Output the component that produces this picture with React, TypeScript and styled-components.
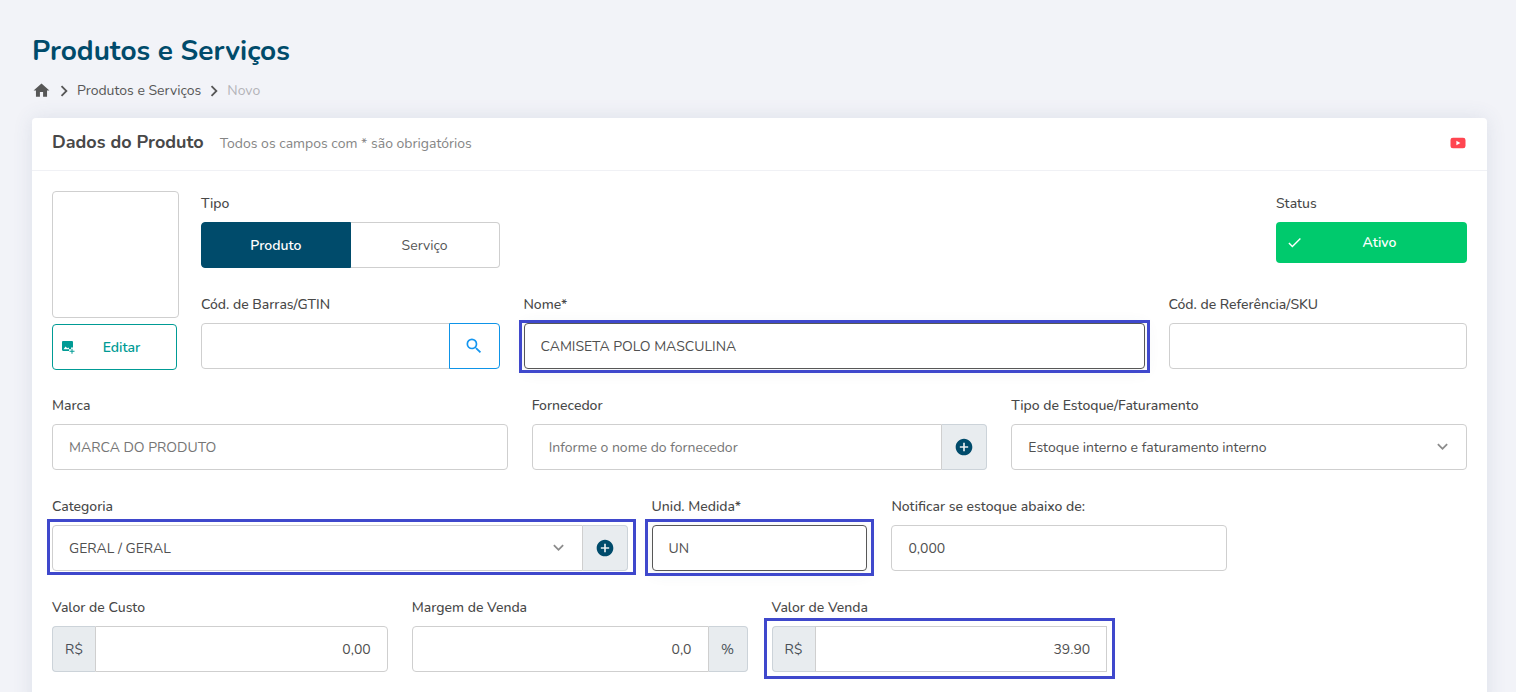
import React from "react";
import styled, { createGlobalStyle, css } from "styled-components";
import {
  MdAddCircle,
  MdCheck,
  MdHome,
  MdKeyboardArrowDown,
  MdKeyboardArrowRight,
  MdSearch,
} from "react-icons/md";

const GlobalStyle = createGlobalStyle`
  *, *::before, *::after { box-sizing: border-box; }
  body {
    margin: 0;
    background: #f2f3f8;
    color: #484848;
    font-family: Nunito, Lato, "Open Sans", sans-serif;
    font-size: 14px;
    line-height: 25px;
  }
  button, input, select { font: inherit; color: inherit; margin: 0; }
`;

const Page = styled.main`
  padding: 32px 29px 32px 32px;
`;

const PageTitle = styled.h1`
  margin: 0;
  color: #004b6b;
  font-size: 28px;
  font-weight: 700;
  line-height: 38px;
`;

const Breadcrumb = styled.nav`
  display: flex;
  align-items: center;
  gap: 2px;
  margin-top: 8px;
  color: #575757;

  a {
    display: flex;
    color: inherit;
    text-decoration: none;
  }
`;

const Current = styled.span`
  color: #b4b4b8;
`;

const Card = styled.section`
  margin-top: 15px;
  background: #fff;
  border-radius: 4px;
  box-shadow: 0 0 20px rgba(69, 90, 120, 0.12);
`;

const CardHeader = styled.header`
  display: flex;
  align-items: center;
  justify-content: space-between;
  height: 53px;
  padding: 0 20px 2px;
  border-bottom: 1px solid #f0f1f5;
`;

const Heading = styled.div`
  display: flex;
  align-items: baseline;
  gap: 16px;
`;

const CardTitle = styled.h2`
  margin: 0;
  font-size: 18px;
  font-weight: 700;
`;

const Hint = styled.span`
  color: #858585;
`;

const VideoLink = styled.a`
  display: flex;
  margin-right: 1px;
`;

const Form = styled.form`
  display: grid;
  gap: 24px;
  padding: 20px 20px 40px;
`;

const Intro = styled.div`
  display: grid;
  grid-template-columns: 125px minmax(0, 1fr);
  gap: 24px;
`;

const Photo = styled.div`
  display: grid;
  grid-template-columns: 100%;
  gap: 6px;
  align-content: start;
  margin-bottom: -1px;
`;

const Preview = styled.div`
  width: 127px;
  height: 127px;
  border: 1px solid #cfcfcf;
  border-radius: 4px;
`;

const Rows = styled.div`
  display: grid;
  align-content: start;
  gap: 24px;
`;

const Row = styled.div`
  display: grid;
  grid-template-columns: repeat(12, minmax(0, 1fr));
  column-gap: 24px;
`;

const Field = styled.div<{ $span: number; $end?: boolean }>`
  grid-column: ${(p) => (p.$end ? `${13 - p.$span} / -1` : `span ${p.$span}`)};
`;

const labelStyle = css`
  display: block;
  margin: 0 0 6px;
  font-weight: 500;
`;

const Label = styled.label`
  ${labelStyle}
`;

const Caption = styled.span`
  ${labelStyle}
`;

const Control = styled.div`
  position: relative;
  display: flex;
  height: 46px;
`;

const controlStyle = css<{ $dark?: boolean; $right?: boolean }>`
  flex: 1;
  min-width: 0;
  width: 100%;
  height: 46px;
  padding: 0 16px;
  border: 1px solid ${(p) => (p.$dark ? "#575757" : "#cfcfcf")};
  border-radius: 4px;
  background: #fff;
  color: #505050;
  text-align: ${(p) => (p.$right ? "right" : "left")};
  outline: none;

  &:not(:first-child) {
    border-top-left-radius: 0;
    border-bottom-left-radius: 0;
  }
`;

const Input = styled.input<{ $dark?: boolean; $right?: boolean; $joined?: boolean }>`
  ${controlStyle}
  ${(p) => p.$joined && "border-top-right-radius: 0; border-bottom-right-radius: 0;"}
  ${(p) => p.$dark && "box-shadow: 0 2px 16px rgba(69, 90, 100, 0.08);"}

  &::placeholder {
    color: #757575;
    opacity: 1;
  }
`;

const SelectBox = styled.div`
  position: relative;
  flex: 1;
  min-width: 0;

  svg {
    position: absolute;
    top: 12px;
    right: 14px;
    color: #8b8b8b;
    pointer-events: none;
  }
`;

const Select = styled.select<{ $joined?: boolean }>`
  ${controlStyle}
  appearance: none;
  ${(p) => p.$joined && "border-top-right-radius: 0; border-bottom-right-radius: 0;"}
`;

const addonStyle = css<{ $side?: "left" | "right" }>`
  display: flex;
  align-items: center;
  justify-content: center;
  flex: none;
  padding: 0;
  border: 1px solid #ccd3d9;
  background: #e8ecef;
  border-radius: ${(p) => (p.$side === "left" ? "4px 0 0 4px" : "0 4px 4px 0")};
  ${(p) => (p.$side === "left" ? "border-right: 0;" : "border-left: 0;")}
`;

const Unit = styled.span<{ $side?: "left" | "right" }>`
  ${addonStyle}
  width: ${(p) => (p.$side === "left" ? 43 : 39)}px;
  color: #495057;
`;

const AddButton = styled.button<{ $side?: "left" | "right" }>`
  ${addonStyle}
  width: 45px;
  color: #004b6b;
`;

const SearchButton = styled.button`
  display: flex;
  align-items: center;
  justify-content: center;
  flex: none;
  width: 51px;
  margin-left: -1px;
  z-index: 1;
  border: 1px solid #0e94e8;
  border-radius: 0 4px 4px 0;
  background: #fff;
  color: #1496f0;
`;

const EditButton = styled.button`
  display: grid;
  grid-template-columns: 14px 1fr;
  align-items: center;
  height: 46px;
  padding: 0 8px;
  border: 1px solid #009b95;
  border-radius: 4px;
  background: #fff;
  color: #009b95;
  font-weight: 600;
`;

const TypeButton = styled.button<{ $active?: boolean }>`
  flex: 1;
  border: 1px solid ${(p) => (p.$active ? "#004b6b" : "#cfcfcf")};
  background: ${(p) => (p.$active ? "#004b6b" : "#fff")};
  color: ${(p) => (p.$active ? "#fff" : "#555")};
  font-weight: ${(p) => (p.$active ? 600 : 400)};

  &:first-child { border-radius: 4px 0 0 4px; }
  &:last-child { border-radius: 0 4px 4px 0; border-left: 0; }
`;

const StatusButton = styled.button`
  display: grid;
  grid-template-columns: 16px 1fr;
  align-items: center;
  width: 100%;
  height: 41px;
  padding: 0 10px;
  border: 0;
  border-radius: 4px;
  background: #00ca6d;
  color: #fff;
  font-weight: 600;
`;

const Highlight = styled.span<{ $inset: string }>`
  position: absolute;
  inset: ${(p) => p.$inset};
  z-index: 2;
  border: 3px solid #3f48cc;
  pointer-events: none;
`;

const YoutubeIcon = () => (
  <svg width="16" height="12" viewBox="0 0 16 12" aria-hidden="true">
    <rect x="0.5" y="0.7" width="15" height="10.6" rx="2.4" fill="#ff4550" />
    <path d="M6.4 3.8v4.4l4-2.2z" fill="#fff" />
  </svg>
);

const ImagePlusIcon = () => (
  <svg width="14" height="14" viewBox="0 0 14 14" fill="currentColor" aria-hidden="true">
    <path d="M2.200 1h8.600C11.500 1 12 1.500 12 2.200V7.500H10V9.300H8V11H2.200C1.500 11 1 10.500 1 9.800V2.200C1 1.500 1.500 1 2.200 1zM2.500 9.300H8V8.200L7.300 7.400 6.200 8.300 4.600 6.600z" />
    <path d="M10.500 8.800h1v2h2v1h-2v2h-1v-2h-2v-1h2z" />
  </svg>
);

export default function App() {
  return (
    <>
      <GlobalStyle />
      <Page>
        <PageTitle>Produtos e Serviços</PageTitle>
        <Breadcrumb aria-label="Navegação">
          <a href="#inicio" aria-label="Início">
            <MdHome size={19} />
          </a>
          <MdKeyboardArrowRight size={22} />
          <a href="#produtos">Produtos e Serviços</a>
          <MdKeyboardArrowRight size={22} />
          <Current aria-current="page">Novo</Current>
        </Breadcrumb>

        <Card>
          <CardHeader>
            <Heading>
              <CardTitle>Dados do Produto</CardTitle>
              <Hint>Todos os campos com * são obrigatórios</Hint>
            </Heading>
            <VideoLink href="#video" aria-label="Vídeo">
              <YoutubeIcon />
            </VideoLink>
          </CardHeader>

          <Form>
            <Intro>
              <Photo>
                <Preview />
                <EditButton type="button">
                  <ImagePlusIcon />
                  <span>Editar</span>
                </EditButton>
              </Photo>
              <Rows>
                <Row>
                  <Field $span={3}>
                    <Caption id="tipo">Tipo</Caption>
                    <Control role="group" aria-labelledby="tipo">
                      <TypeButton type="button" $active>Produto</TypeButton>
                      <TypeButton type="button">Serviço</TypeButton>
                    </Control>
                  </Field>
                  <Field $span={2} $end>
                    <Label htmlFor="status">Status</Label>
                    <StatusButton id="status" type="button">
                      <MdCheck size={17} />
                      <span>Ativo</span>
                    </StatusButton>
                  </Field>
                </Row>
                <Row>
                  <Field $span={3}>
                    <Label htmlFor="gtin">Cód. de Barras/GTIN</Label>
                    <Control>
                      <Input id="gtin" $joined />
                      <SearchButton type="button" aria-label="Buscar">
                        <MdSearch size={20} />
                      </SearchButton>
                    </Control>
                  </Field>
                  <Field $span={6}>
                    <Label htmlFor="nome">Nome*</Label>
                    <Control>
                      <Input id="nome" defaultValue="CAMISETA POLO MASCULINA" $dark />
                      <Highlight $inset="-3px -5px -4px" />
                    </Control>
                  </Field>
                  <Field $span={3}>
                    <Label htmlFor="sku">Cód. de Referência/SKU</Label>
                    <Control>
                      <Input id="sku" />
                    </Control>
                  </Field>
                </Row>
              </Rows>
            </Intro>

            <Row>
              <Field $span={4}>
                <Label htmlFor="marca">Marca</Label>
                <Control>
                  <Input id="marca" placeholder="MARCA DO PRODUTO" />
                </Control>
              </Field>
              <Field $span={4}>
                <Label htmlFor="fornecedor">Fornecedor</Label>
                <Control>
                  <Input id="fornecedor" placeholder="Informe o nome do fornecedor" $joined />
                  <AddButton type="button" aria-label="Adicionar fornecedor">
                    <MdAddCircle size={20} />
                  </AddButton>
                </Control>
              </Field>
              <Field $span={4}>
                <Label htmlFor="estoque">Tipo de Estoque/Faturamento</Label>
                <Control>
                  <SelectBox>
                    <Select id="estoque">
                      <option>Estoque interno e faturamento interno</option>
                    </Select>
                    <MdKeyboardArrowDown size={21} />
                  </SelectBox>
                </Control>
              </Field>
            </Row>

            <Row>
              <Field $span={5}>
                <Label htmlFor="categoria">Categoria</Label>
                <Control>
                  <SelectBox>
                    <Select id="categoria" $joined>
                      <option>GERAL / GERAL</option>
                    </Select>
                    <MdKeyboardArrowDown size={21} />
                  </SelectBox>
                  <AddButton type="button" aria-label="Adicionar categoria">
                    <MdAddCircle size={20} />
                  </AddButton>
                  <Highlight $inset="-6px -8px -4px -5px" />
                </Control>
              </Field>
              <Field $span={2}>
                <Label htmlFor="unidade">Unid. Medida*</Label>
                <Control>
                  <Input id="unidade" defaultValue="UN" $dark />
                  <Highlight $inset="-6px -7px -5px" />
                </Control>
              </Field>
              <Field $span={3}>
                <Label htmlFor="notificar">Notificar se estoque abaixo de:</Label>
                <Control>
                  <Input id="notificar" defaultValue="0,000" />
                </Control>
              </Field>
            </Row>

            <Row>
              <Field $span={3}>
                <Label htmlFor="custo">Valor de Custo</Label>
                <Control>
                  <Unit $side="left">R$</Unit>
                  <Input id="custo" defaultValue="0,00" $right />
                </Control>
              </Field>
              <Field $span={3}>
                <Label htmlFor="margem">Margem de Venda</Label>
                <Control>
                  <Input id="margem" defaultValue="0,0" $right $joined />
                  <Unit $side="right">%</Unit>
                </Control>
              </Field>
              <Field $span={3}>
                <Label htmlFor="venda">Valor de Venda</Label>
                <Control>
                  <Unit $side="left">R$</Unit>
                  <Input id="venda" defaultValue="39.90" $right $joined />
                  <Highlight $inset="-8px -8px -7px" />
                </Control>
              </Field>
            </Row>
          </Form>
        </Card>
      </Page>
    </>
  );
}
